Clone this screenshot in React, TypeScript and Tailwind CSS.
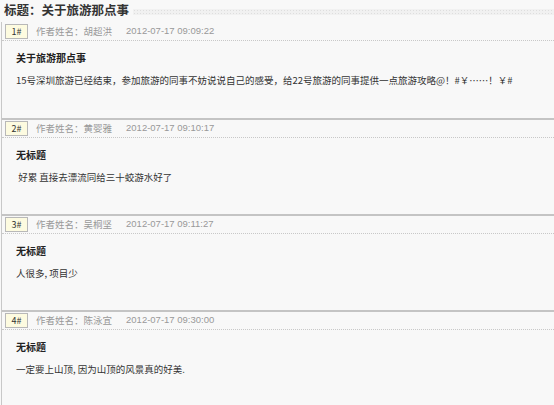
import React from "react";

type Post = {
  no: number;
  author: string;
  time: string;
  title: string;
  body: string;
};

const posts: Post[] = [
  {
    no: 1,
    author: "胡超洪",
    time: "2012-07-17 09:09:22",
    title: "关于旅游那点事",
    body: "15号深圳旅游已经结束，参加旅游的同事不妨说说自己的感受，给22号旅游的同事提供一点旅游攻略@！#￥……！￥#",
  },
  {
    no: 2,
    author: "黄婴雅",
    time: "2012-07-17 09:10:17",
    title: "无标题",
    body: "\u00a0好累 直接去漂流同给三十蛟游水好了",
  },
  {
    no: 3,
    author: "吴桐坚",
    time: "2012-07-17 09:11:27",
    title: "无标题",
    body: "人很多, 项目少",
  },
  {
    no: 4,
    author: "陈泳宜",
    time: "2012-07-17 09:30:00",
    title: "无标题",
    body: "一定要上山顶, 因为山顶的风景真的好美.",
  },
];

const PostItem = ({ post, first }: { post: Post; first: boolean }) => {
  return (
    <div
      className={`h-[96px] ${
        first ? "border-t border-transparent" : "border-t-2 border-[#c4c4c4]"
      }`}
    >
      <div className="h-[18px] flex items-center border-b border-dotted border-[#c8c8c8]">
        <div className="ml-[3px] w-[23px] h-[15px] flex items-center justify-center border border-[#b8b8b8] bg-[#fdfbe0] text-[9px] text-[#333]">
          {post.no}#
        </div>
        <span className="ml-[8px] text-[9.5px] text-[#999]">
          作者姓名：{post.author}
        </span>
        <span className="ml-[14px] text-[9.5px] text-[#999] font-['Liberation_Sans',sans-serif]">
          {post.time}
        </span>
      </div>
      <div className="pl-[14px] pt-[10px] text-[10px] leading-[14px] font-bold text-[#222]">
        {post.title}
      </div>
      <div className="pl-[14px] pt-[9px] text-[9.5px] leading-[12px] text-[#333] whitespace-nowrap">
        {post.body}
      </div>
    </div>
  );
};

export default function App() {
  return (
    <div className="w-[554px] h-[405px] overflow-hidden bg-[#f8f8f8] font-['Noto_Sans_CJK_SC','Noto_Sans',sans-serif]">
      <div className="h-[22px] flex items-start">
        <span className="pl-[4px] pr-[4px] text-[12.5px] font-bold text-[#333] leading-[20px] bg-[#f8f8f8]">
          标题：关于旅游那点事
        </span>
        <div className="flex-1 mt-[9px] h-[6px] bg-[radial-gradient(#dedede_1px,#f1f1f1_1px)] bg-[length:3px_3px]" />
      </div>
      <div className="ml-[1px] border-l border-[#c8c8c8]">
        {posts.map((p, i) => (
          <PostItem key={p.no} post={p} first={i === 0} />
        ))}
      </div>
    </div>
  );
}
